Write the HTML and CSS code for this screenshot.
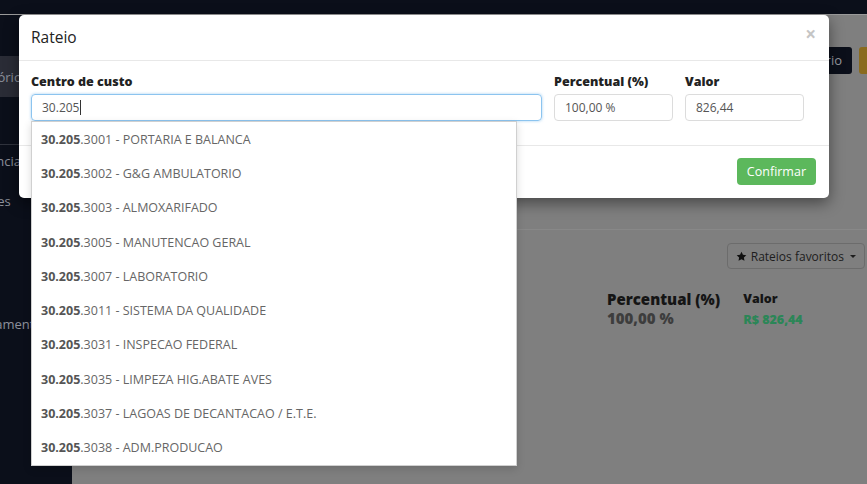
FILE: index.html
```html
<!DOCTYPE html>
<html lang="pt-BR">
<head>
<meta charset="utf-8">
<title>Rateio</title>
<link rel="stylesheet" href="styles.css">
</head>
<body>
<div class="app">
  <header class="topbar"></header>
  <div class="main">
    <nav class="sidebar">
      <div class="side-item active"><span class="side-label">Relatórios</span></div>
      <div class="side-sep"></div>
      <div class="side-item"><span class="side-label">Gerência</span></div>
      <div class="side-item"><span class="side-label">Ajustes</span></div>
      <div class="side-item lower"><span class="side-label">Lançamentos</span></div>
    </nav>
    <section class="content">
      <div class="toolbar">
        <span class="btn-dark">Relatório</span>
        <span class="btn-yellow">Novo</span>
      </div>
      <div class="content-line"></div>
      <div class="fav-row">
        <span class="btn-fav"><svg class="star" viewBox="0 0 24 24" width="11" height="11"><path d="M12 1.5l3.2 6.6 7.3 1-5.3 5.1 1.3 7.2L12 18l-6.5 3.4 1.3-7.2L1.5 9.1l7.3-1z" fill="#111"/></svg>Rateios favoritos<span class="caret"></span></span>
      </div>
      <div class="summary">
        <div class="sum-col">
          <div class="sum-title big">Percentual (%)</div>
          <div class="sum-val big">100,00 %</div>
        </div>
        <div class="sum-col">
          <div class="sum-title">Valor</div>
          <div class="sum-val green">R$ 826,44</div>
        </div>
      </div>
    </section>
  </div>
</div>

<div class="modal">
  <div class="modal-header">
    <h4 class="modal-title">Rateio</h4>
    <span class="close">×</span>
  </div>
  <div class="modal-body">
    <div class="form-row">
      <div class="field field-cc">
        <label class="lbl">Centro de custo</label>
        <div class="input focus">30.205<span class="cursor"></span></div>
        <ul class="typeahead">
          <li><b>30.205</b>.3001 - PORTARIA E BALANCA</li>
          <li><b>30.205</b>.3002 - G&amp;G AMBULATORIO</li>
          <li><b>30.205</b>.3003 - ALMOXARIFADO</li>
          <li><b>30.205</b>.3005 - MANUTENCAO GERAL</li>
          <li><b>30.205</b>.3007 - LABORATORIO</li>
          <li><b>30.205</b>.3011 - SISTEMA DA QUALIDADE</li>
          <li><b>30.205</b>.3031 - INSPECAO FEDERAL</li>
          <li><b>30.205</b>.3035 - LIMPEZA HIG.ABATE AVES</li>
          <li><b>30.205</b>.3037 - LAGOAS DE DECANTACAO / E.T.E.</li>
          <li><b>30.205</b>.3038 - ADM.PRODUCAO</li>
        </ul>
      </div>
      <div class="field">
        <label class="lbl">Percentual (%)</label>
        <div class="input">100,00 %</div>
      </div>
      <div class="field">
        <label class="lbl">Valor</label>
        <div class="input">826,44</div>
      </div>
    </div>
  </div>
  <div class="modal-footer">
    <button class="btn-confirm">Confirmar</button>
  </div>
</div>
</body>
</html>
```

FILE: styles.css
```css
* { box-sizing: border-box; }
html, body { margin: 0; padding: 0; }
body {
  width: 867px;
  height: 484px;
  overflow: hidden;
  font-family: "Open Sans", "DejaVu Sans", sans-serif;
  background: #7f7f7f;
  position: relative;
}
.app { display: flex; flex-direction: column; height: 484px; }
.topbar { height: 15px; background: #0b0f1a; border-bottom: 1px solid #9a9a9a; flex: none; }
.main { display: flex; flex: 1; }
.sidebar {
  width: 72px;
  background: #0b0f1a;
  overflow: hidden;
  padding-top: 41px;
  flex: none;
}
.side-item {
  height: 41px;
  display: flex;
  align-items: center;
  color: #8d909a;
  font-size: 13px;
  white-space: nowrap;
}
.side-item.active { background: #2a2c36; }
.side-sep { height: 1px; background: #30333d; margin: 47px 0 -5px; }
.side-label { margin-left: -33px; }
.side-item + .side-item { margin-top: -1px; }
.side-item.lower { margin-top: 82px; }
.content { flex: 1; position: relative; }
.toolbar { display: flex; justify-content: flex-end; gap: 7px; padding-top: 32px; margin-right: -52px; }
.btn-dark {
  background: #0b0f1a; color: #9a9ca3; font-size: 13px;
  height: 27px; line-height: 27px; padding: 0 10px; border-radius: 3px;
}
.btn-yellow {
  background: #8a6b1f; color: #8a6b1f; font-size: 13px;
  height: 27px; line-height: 27px; padding: 0 10px; border-radius: 3px; width: 60px;
}
.content-line { height: 1px; background: #888; margin-top: 155px; }
.fav-row { display: flex; justify-content: flex-end; padding-right: 2px; margin-top: 13px; }
.btn-fav {
  display: inline-flex; align-items: center; gap: 4px;
  height: 26px; padding: 0 8px 0 8px;
  border: 1px solid #6c6c6c; border-radius: 4px;
  color: #1d1d1d; font-size: 12px;
}
.star { margin-right: 0; }
.caret {
  width: 0; height: 0; margin-left: 2px;
  border-left: 3.5px solid transparent; border-right: 3.5px solid transparent;
  border-top: 3.5px solid #1d1d1d;
}
.summary { display: flex; padding-left: 535px; margin-top: 21px; gap: 23px; }
.sum-title { font-weight: 800; color: #151515; font-size: 12.5px; line-height: 18px; }
.sum-title.big { font-size: 15px; line-height: 18px; }
.sum-val { font-weight: 800; font-size: 12.5px; line-height: 20px; }
.sum-val.big { font-size: 15px; color: #3d3d3d; }
.sum-val.green { color: #2b8657; margin-top: 2px; }

/* modal */
.modal {
  position: absolute;
  left: 19px; top: 15px; width: 810px;
  background: #fff;
  border-radius: 5px;
  box-shadow: 0 5px 15px rgba(0,0,0,.45);
  color: #333;
}
.modal-header {
  display: flex; justify-content: space-between; align-items: center;
  padding: 11px 13px 11px 12px;
  border-bottom: 1px solid #e8e8e8;
}
.modal-title { margin: 0; font-size: 15.5px; font-weight: 400; line-height: 23px; color: #222; }
.close { color: #c5c5c5; font-size: 19px; font-weight: 700; line-height: 19px; margin-top: -6px; }
.modal-body { padding: 12px 12px 24px 12px; }
.form-row { display: grid; grid-template-columns: 511px 119px 119px; column-gap: 12px; }
.field { position: relative; display: flex; flex-direction: column; }
.lbl { font-weight: 800; font-size: 12.5px; line-height: 18px; color: #222; margin-bottom: 3px; }
.input {
  height: 27px; border: 1px solid #dcdcdc; border-radius: 4px;
  padding: 0 10px; font-size: 12px; line-height: 25px; color: #555;
  display: flex; align-items: center;
}
.input.focus { border-color: #8cc4ef; box-shadow: 0 0 3px rgba(102,175,233,.6); }
.cursor { display: inline-block; width: 1px; height: 15px; background: #333; margin-left: 1px; }
.typeahead {
  position: absolute; left: 0; top: 48px; width: 486px;
  margin: 0; padding: 0; list-style: none;
  background: #fff; border: 1px solid #d0d0d0;
  box-shadow: 0 3px 8px rgba(0,0,0,.15);
  z-index: 5;
}
.typeahead li {
  height: 34.3px; padding: 0 9px;
  display: flex; align-items: center;
  font-size: 12.5px; color: #666; white-space: nowrap;
}
.typeahead b { color: #555; font-weight: 700; }
.modal-footer {
  display: flex; justify-content: flex-end;
  padding: 12px 13px 13px 12px;
  border-top: 1px solid #e8e8e8;
}
.btn-confirm {
  height: 27px; padding: 0 10px;
  background: #5cb85c; color: #fff; border: 0; border-radius: 4px;
  font-family: inherit; font-size: 12.5px;
}
```
